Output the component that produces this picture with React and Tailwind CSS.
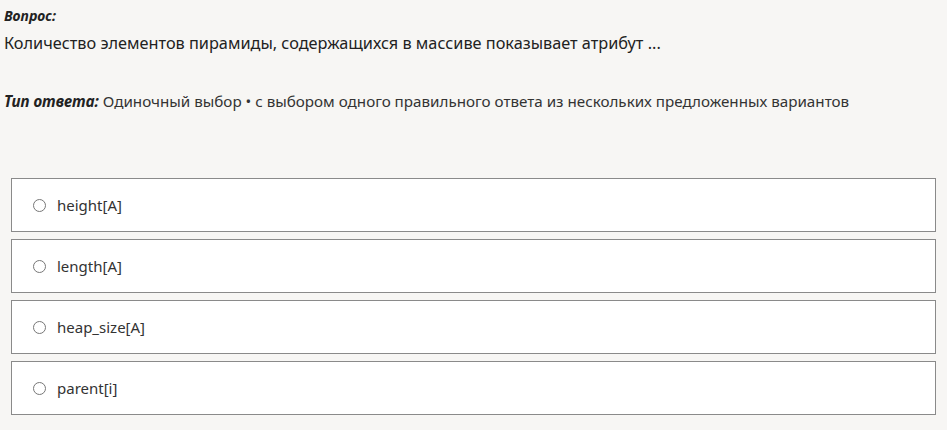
const options = ['height[A]', 'length[A]', 'heap_size[A]', 'parent[i]']

export default function App() {
  return (
    <div className="w-[947px] h-[430px] bg-[#f7f6f4] text-[#222] font-['Noto_Sans',sans-serif] overflow-hidden">
      <div className="pl-[4px] pt-[6px]">
        <div className="text-[14px] leading-[20px] font-bold italic">Вопрос:</div>
        <div className="text-[16.3px] leading-[24px] mt-[5px]">
          Количество элементов пирамиды, содержащихся в массиве показывает атрибут ...
        </div>
        <div className="text-[15.2px] leading-[22px] mt-[35px]">
          <span className="font-bold italic">Тип ответа:</span>{' '}
          <span className="text-[#333]">
            Одиночный выбор • с выбором одного правильного ответа из нескольких предложенных вариантов
          </span>
        </div>
      </div>
      <div className="flex flex-col gap-[7px] px-[11px] mt-[66px]">
        {options.map((opt) => (
          <label
            key={opt}
            className="flex items-center h-[54px] bg-white border border-[#8a8a8a] pl-[21px]"
          >
            <span className="w-[13px] h-[13px] rounded-full border border-[#777] bg-white" />
            <span className="ml-[11px] text-[15px] text-[#333]">{opt}</span>
          </label>
        ))}
      </div>
    </div>
  )
}
